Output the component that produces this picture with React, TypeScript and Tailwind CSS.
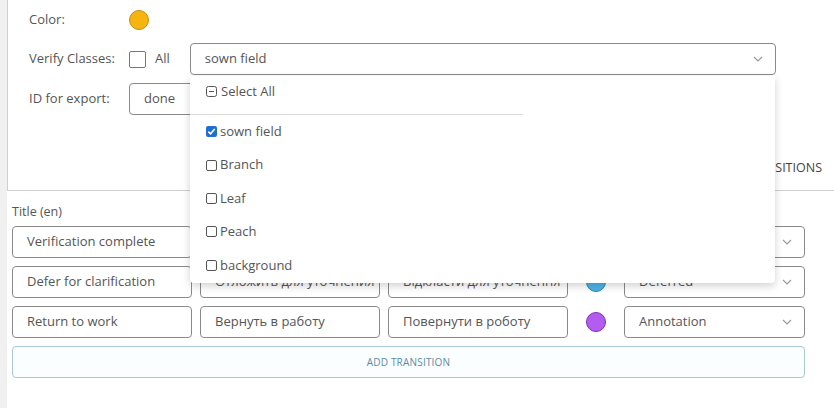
import React from 'react';

const font = { fontFamily: '"Open Sans", "Noto Sans", sans-serif' };

function Chevron() {
  return (
    <svg width="10" height="6" viewBox="0 0 10 6" className="shrink-0">
      <polyline points="1,1 5,5 9,1" fill="none" stroke="#9a9a9a" strokeWidth="1.2" />
    </svg>
  );
}

function Box({ text }: { text: string }) {
  return (
    <div className="h-8 w-[180px] shrink-0 border border-[#8a8a8a] rounded-[4px] flex items-center px-[14px] text-[13px] text-[#555] whitespace-nowrap overflow-hidden">
      {text}
    </div>
  );
}

function SelectBox({ text }: { text: string }) {
  return (
    <div className="h-8 w-[181px] shrink-0 border border-[#8a8a8a] rounded-[4px] flex items-center justify-between pl-[14px] pr-[12px] text-[13px] text-[#555] whitespace-nowrap">
      <span>{text}</span>
      <Chevron />
    </div>
  );
}

function Dot({ color, border }: { color: string; border: string }) {
  return (
    <div className="w-[40px] shrink-0 flex justify-center">
      <div className={`w-5 h-5 rounded-full border ${color} ${border}`} />
    </div>
  );
}

function SmallCheck({ checked }: { checked?: boolean }) {
  if (checked) {
    return (
      <svg width="11" height="11" viewBox="0 0 11 11" className="shrink-0">
        <rect x="0" y="0" width="11" height="11" rx="2" fill="#1f6fd1" />
        <polyline points="2.3,5.6 4.5,7.8 8.7,3" fill="none" stroke="#fff" strokeWidth="1.6" />
      </svg>
    );
  }
  return <div className="w-[11px] h-[11px] shrink-0 border border-[#555] rounded-[2px]" />;
}

const items = [
  { label: 'sown field', checked: true },
  { label: 'Branch' },
  { label: 'Leaf' },
  { label: 'Peach' },
  { label: 'background' },
];

export default function App() {
  return (
    <div className="w-[834px] h-[408px] flex bg-white overflow-hidden" style={font}>
      <div className="w-[7px] shrink-0 bg-[#f0f0f0]" />
      <div className="flex-1 min-w-0 flex flex-col relative">
        {/* settings card */}
        <div className="h-[191px] border-l border-b border-[#cfcfcf]">
          <div className="flex items-center h-[20px] mt-[10px]">
            <span className="w-[121px] pl-[21px] text-[13px] text-[#555]">Color:</span>
            <div className="w-5 h-5 rounded-full bg-[#f5b40f] border border-[#c98e05]" />
          </div>
          <div className="flex items-center h-8 mt-[13px]">
            <span className="w-[121px] pl-[21px] text-[13px] text-[#555]">Verify Classes:</span>
            <div className="w-[17px] h-[17px] border border-[#777] rounded-[2px]" />
            <span className="ml-[9px] text-[13px] text-[#555]">All</span>
            <div className="ml-[20px] w-[586px] h-8 border border-[#8a8a8a] rounded-[4px] flex items-center justify-between pl-[14px] pr-[12px] text-[13px] text-[#555]">
              <span>sown field</span>
              <Chevron />
            </div>
          </div>
          <div className="flex items-center h-8 mt-2">
            <span className="w-[121px] pl-[21px] text-[13px] text-[#555]">ID for export:</span>
            <div className="w-[150px] h-8 border border-[#8a8a8a] rounded-[4px] flex items-center px-[14px] text-[13px] text-[#555]">done</div>
          </div>
          <div className="flex justify-end pr-[12px] mt-[44px]">
            <span className="text-[12.5px] text-[#444] whitespace-nowrap">TRANSITIONS</span>
          </div>
        </div>

        {/* transitions */}
        <div className="pl-[5px]">
          <div className="text-[12.5px] text-[#555] mt-[12px] h-[21px]">Title (en)</div>
          <div className="flex flex-col gap-2 mt-[2px]">
            <div className="flex items-center gap-2">
              <Box text="Verification complete" />
              <Box text="Проверка завершена" />
              <Box text="Перевірку завершено" />
              <Dot color="bg-[#4caf50]" border="border-[#2e7d32]" />
              <SelectBox text="Done" />
            </div>
            <div className="flex items-center gap-2">
              <Box text="Defer for clarification" />
              <Box text="Отложить для уточнения" />
              <Box text="Відкласти для уточнення" />
              <Dot color="bg-[#4fb3e8]" border="border-[#2a85b5]" />
              <SelectBox text="Deferred" />
            </div>
            <div className="flex items-center gap-2">
              <Box text="Return to work" />
              <Box text="Вернуть в работу" />
              <Box text="Повернути в роботу" />
              <Dot color="bg-[#b45cf0]" border="border-[#7b2fb5]" />
              <SelectBox text="Annotation" />
            </div>
          </div>
          <button className="mt-2 w-[793px] h-8 border border-[#a9c7d6] rounded-[4px] bg-[#fbfeff] text-[10px] text-[#5b8aa6] tracking-[0.2px]">
            ADD TRANSITION
          </button>
        </div>

        {/* open dropdown */}
        <div className="absolute left-[183px] top-[76px] w-[585px] h-[207px] bg-white rounded-b-[4px] shadow-[0_3px_8px_rgba(0,0,0,0.18)] z-10">
          <div className="w-[333px] border-b border-[#dcdcdc] h-[39px] pt-[6px] pl-[16px] flex items-start">
            <div className="flex items-center gap-[4px] text-[13px] text-[#555]">
              <svg width="11" height="11" viewBox="0 0 11 11" className="shrink-0">
                <rect x="0.5" y="0.5" width="10" height="10" rx="2" fill="none" stroke="#555" />
                <line x1="3" y1="5.5" x2="8" y2="5.5" stroke="#555" />
              </svg>
              <span>Select All</span>
            </div>
          </div>
          <div className="flex flex-col pl-[16px]">
            {items.map((it) => (
              <div key={it.label} className="h-[33.4px] flex items-center gap-[3px] text-[13px] text-[#555]">
                <SmallCheck checked={it.checked} />
                <span>{it.label}</span>
              </div>
            ))}
          </div>
        </div>
      </div>
    </div>
  );
}
